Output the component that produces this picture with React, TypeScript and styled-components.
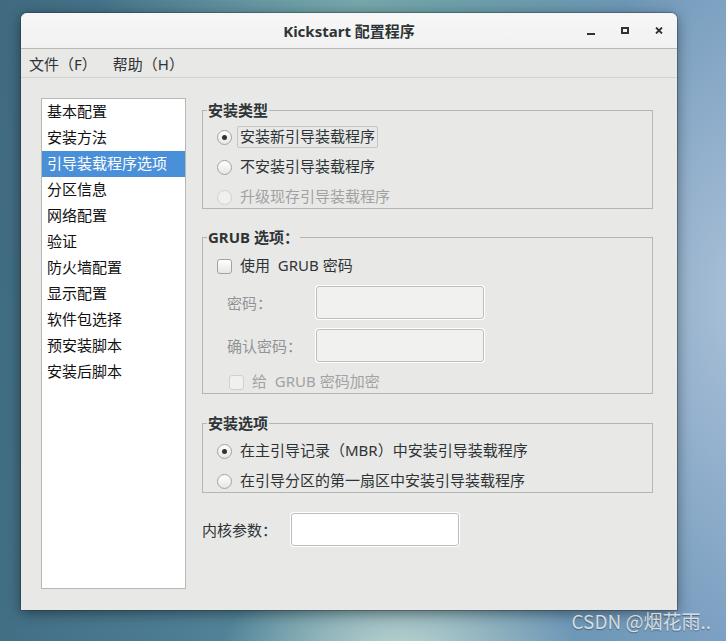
import * as React from 'react'
import styled, { createGlobalStyle } from 'styled-components'

const GlobalStyle = createGlobalStyle`
  html, body {
    margin: 0;
    padding: 0;
  }
  body {
    font-family: "Noto Sans", "Noto Sans CJK SC", sans-serif;
  }
`

const Desktop = styled.div`
  position: relative;
  height: 641px;
  overflow: hidden;
  box-sizing: border-box;
  padding: 13px 0 0 21px;
  background:
    radial-gradient(ellipse 180px 110px at 400px 660px, rgba(200, 220, 214, 0.95), rgba(200, 220, 214, 0) 100%),
    radial-gradient(ellipse 200px 360px at 740px 300px, rgba(175, 195, 218, 0.9), rgba(175, 195, 218, 0) 100%),
    radial-gradient(ellipse 260px 140px at 360px 0px, rgba(120, 170, 172, 0.9), rgba(120, 170, 172, 0) 100%),
    linear-gradient(95deg, #3f6a80 0%, #4d7d93 30%, #5a8fa0 50%, #6d97b6 80%, #7a9fc2 100%);
`

const Watermark = styled.div`
  position: absolute;
  right: 15px;
  bottom: 8px;
  font-family: "Noto Sans CJK SC", "Noto Sans", sans-serif;
  font-size: 19px;
  line-height: 24px;
  color: rgba(236, 240, 242, 0.85);
  text-shadow: 0 1px 1px rgba(0, 0, 0, 0.35);
`

const Window = styled.div`
  width: 656px;
  height: 597px;
  display: flex;
  flex-direction: column;
  background: #e8e8e7;
  border-radius: 6px 6px 0 0;
  overflow: hidden;
  box-shadow: 0 0 0 1px rgba(30, 45, 55, 0.35), 0 3px 14px rgba(0, 0, 0, 0.45);
`

const TitleBar = styled.div`
  height: 35px;
  flex: none;
  display: grid;
  grid-template-columns: 1fr auto 1fr;
  align-items: center;
  background: linear-gradient(#f7f7f7, #f1f1f1);
  border-bottom: 1px solid #b9b9b7;
`

const Title = styled.div`
  grid-column: 2;
  font-size: 15px;
  font-weight: bold;
  color: #2e3436;
`

const WinButtons = styled.div`
  justify-self: end;
  display: flex;
  padding-right: 1px;
`

const WinButton = styled.div`
  width: 34px;
  height: 35px;
  display: flex;
  align-items: center;
  justify-content: center;
  color: #2e3436;
`

const MenuBar = styled.div`
  height: 28px;
  flex: none;
  display: flex;
  align-items: center;
  border-bottom: 1px solid #d2d2d0;
`

const MenuItem = styled.div`
  padding: 0 8px;
  font-size: 15px;
  color: #2e3436;
`

const Main = styled.div`
  flex: 1;
  display: flex;
  gap: 16px;
  padding: 20px 24px 21px 20px;
  min-height: 0;
`

const List = styled.div`
  width: 145px;
  flex: none;
  box-sizing: border-box;
  border: 1px solid #b7b7b5;
  background: #fff;
`

const ListItem = styled.div<{ $selected?: boolean }>`
  height: 26px;
  line-height: 24px;
  padding-left: 5px;
  font-size: 15px;
  color: ${p => (p.$selected ? '#fff' : '#111')};
  background: ${p => (p.$selected ? '#4a90d9' : 'transparent')};
`

const Column = styled.div`
  flex: 1;
  display: flex;
  flex-direction: column;
  padding-top: 2px;
`

const Group = styled.fieldset<{ $gap?: number }>`
  margin: ${p => p.$gap || 0}px 0 0 0;
  padding: 0;
  min-width: 0;
  border: 1px solid #b5b5b3;
`

const Legend = styled.legend`
  margin-left: 4px;
  padding: 0 1px;
  font-size: 15px;
  font-weight: bold;
  line-height: 20px;
  color: #2e3436;
`

const GroupBody = styled.div<{ $top: number }>`
  display: flex;
  flex-direction: column;
  gap: 8px;
  padding-top: ${p => p.$top}px;
`

const OptionRow = styled.div<{ $indent?: number }>`
  height: 22px;
  display: flex;
  align-items: center;
  padding-left: ${p => p.$indent ?? 14}px;
`

const Radio = styled.span<{ $checked?: boolean; $disabled?: boolean }>`
  width: 15px;
  height: 15px;
  flex: none;
  box-sizing: border-box;
  border-radius: 50%;
  border: 1px solid ${p => (p.$disabled ? '#d0d0ce' : '#a3a3a1')};
  background: ${p => (p.$disabled ? '#f0f0ef' : 'linear-gradient(#ffffff, #e6e6e5)')};
  display: flex;
  align-items: center;
  justify-content: center;
  &::after {
    content: '';
    width: 5px;
    height: 5px;
    border-radius: 50%;
    background: ${p => (p.$checked ? '#2e3436' : 'transparent')};
  }
`

const Check = styled.span<{ $disabled?: boolean }>`
  width: 15px;
  height: 15px;
  flex: none;
  box-sizing: border-box;
  border-radius: 3px;
  border: 1px solid ${p => (p.$disabled ? '#d0d0ce' : '#a3a3a1')};
  background: ${p => (p.$disabled ? '#f0f0ef' : 'linear-gradient(#ffffff, #e6e6e5)')};
`

const OptionLabel = styled.span<{ $focus?: boolean; $disabled?: boolean }>`
  margin-left: 5px;
  padding: 0 2px;
  height: 22px;
  box-sizing: border-box;
  line-height: 19px;
  font-size: 15px;
  white-space: pre;
  border: 1px solid ${p => (p.$focus ? '#c6c6c4' : 'transparent')};
  border-radius: 2px;
  color: ${p => (p.$disabled ? '#a2a2a2' : '#2e3436')};
`

const FieldRow = styled.div<{ $indent?: number }>`
  display: grid;
  grid-template-columns: 88px 170px;
  align-items: center;
  padding-left: ${p => p.$indent ?? 0}px;
`

const FieldLabel = styled.span<{ $disabled?: boolean }>`
  font-size: 15px;
  color: ${p => (p.$disabled ? '#919393' : '#2e3436')};
`

const TextBox = styled.input<{ $disabled?: boolean }>`
  appearance: none;
  width: 168px;
  height: 33px;
  margin: 1px;
  padding: 0 6px;
  box-sizing: border-box;
  border: 1px solid #bdbdbb;
  border-radius: 3px;
  box-shadow: 0 0 0 1px #fff;
  outline: none;
  font: 15px "Noto Sans", "Noto Sans CJK SC", sans-serif;
  background: ${p => (p.$disabled ? '#f1f1f0' : '#fff')};
`

const KernelRow = styled(FieldRow)`
  margin-top: 19px;
`

const sections = [
  '基本配置',
  '安装方法',
  '引导装载程序选项',
  '分区信息',
  '网络配置',
  '验证',
  '防火墙配置',
  '显示配置',
  '软件包选择',
  '预安装脚本',
  '安装后脚本',
]

const App: React.FC = () => {
  return (
    <Desktop>
      <GlobalStyle />
      <Window>
        <TitleBar>
          <Title>Kickstart 配置程序</Title>
          <WinButtons>
            <WinButton>
              <svg width="8" height="8" viewBox="0 0 8 8">
                <rect x="0" y="6" width="8" height="2" fill="currentColor" />
              </svg>
            </WinButton>
            <WinButton>
              <svg width="8" height="7" viewBox="0 0 8 7">
                <rect x="1" y="1" width="6" height="5" fill="none" stroke="currentColor" strokeWidth="2" />
              </svg>
            </WinButton>
            <WinButton>
              <svg width="8" height="7" viewBox="0 0 8 7">
                <path d="M1 0.5 L7 6.5 M7 0.5 L1 6.5" stroke="currentColor" strokeWidth="1.8" />
              </svg>
            </WinButton>
          </WinButtons>
        </TitleBar>
        <MenuBar>
          <MenuItem>文件（F）</MenuItem>
          <MenuItem>帮助（H）</MenuItem>
        </MenuBar>
        <Main>
          <List>
            {sections.map((s, idx) => (
              <ListItem key={`section-${idx}`} $selected={idx === 2}>{s}</ListItem>
            ))}
          </List>
          <Column>
            <Group>
              <Legend>安装类型</Legend>
              <GroupBody $top={6}>
                <OptionRow>
                  <Radio $checked />
                  <OptionLabel $focus>安装新引导装载程序</OptionLabel>
                </OptionRow>
                <OptionRow>
                  <Radio />
                  <OptionLabel>不安装引导装载程序</OptionLabel>
                </OptionRow>
                <OptionRow>
                  <Radio $disabled />
                  <OptionLabel $disabled>升级现存引导装载程序</OptionLabel>
                </OptionRow>
              </GroupBody>
            </Group>
            <Group $gap={18}>
              <Legend>GRUB 选项：</Legend>
              <GroupBody $top={8}>
                <OptionRow>
                  <Check />
                  <OptionLabel>使用  GRUB 密码</OptionLabel>
                </OptionRow>
                <FieldRow $indent={24}>
                  <FieldLabel $disabled>密码：</FieldLabel>
                  <TextBox $disabled disabled type="password" />
                </FieldRow>
                <FieldRow $indent={24}>
                  <FieldLabel $disabled>确认密码：</FieldLabel>
                  <TextBox $disabled disabled type="password" />
                </FieldRow>
                <OptionRow $indent={26}>
                  <Check $disabled />
                  <OptionLabel $disabled>给  GRUB 密码加密</OptionLabel>
                </OptionRow>
              </GroupBody>
            </Group>
            <Group $gap={19}>
              <Legend>安装选项</Legend>
              <GroupBody $top={7}>
                <OptionRow>
                  <Radio $checked />
                  <OptionLabel>在主引导记录（MBR）中安装引导装载程序</OptionLabel>
                </OptionRow>
                <OptionRow>
                  <Radio />
                  <OptionLabel>在引导分区的第一扇区中安装引导装载程序</OptionLabel>
                </OptionRow>
              </GroupBody>
            </Group>
            <KernelRow>
              <FieldLabel>内核参数：</FieldLabel>
              <TextBox type="text" />
            </KernelRow>
          </Column>
        </Main>
      </Window>
      <Watermark>CSDN @烟花雨..</Watermark>
    </Desktop>
  )
}

export default App
